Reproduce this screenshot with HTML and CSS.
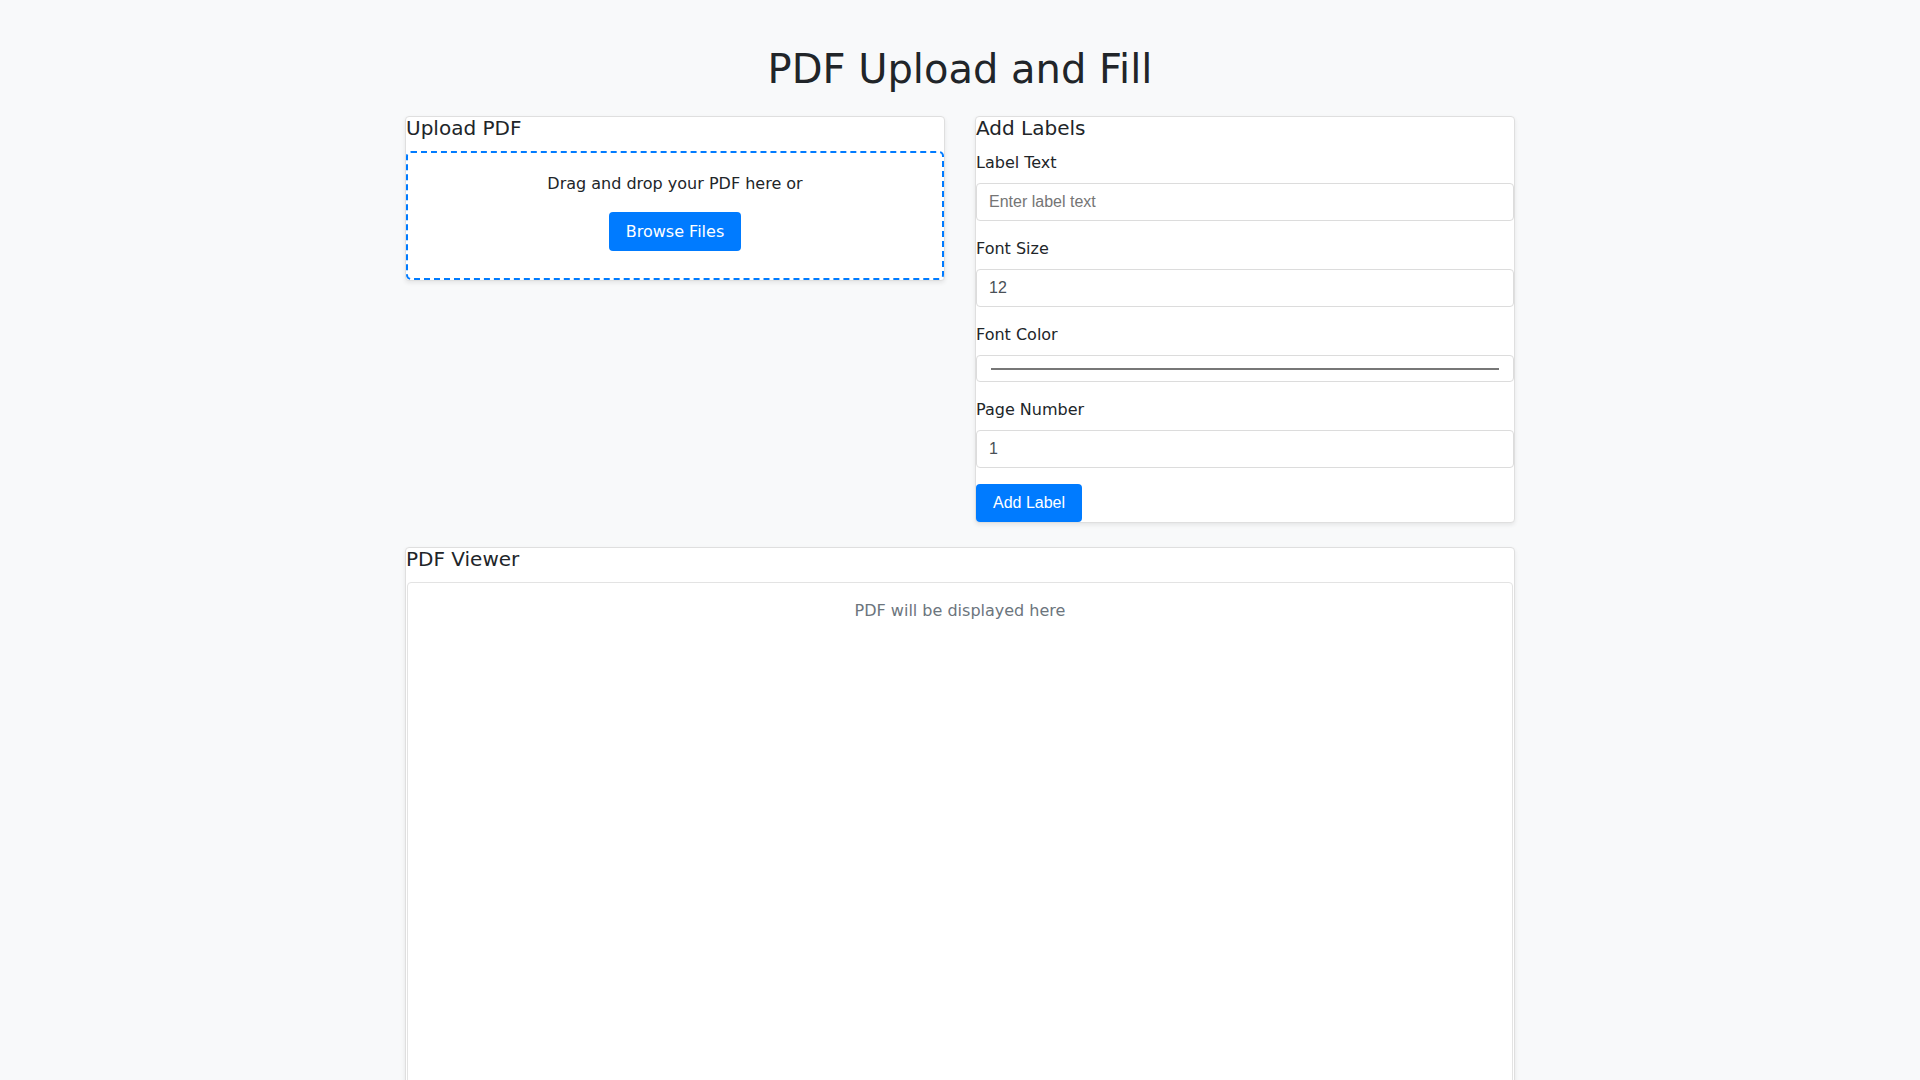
FILE: index.html
```html
<!DOCTYPE html>
<html lang="en">
<head>
  <meta charset="UTF-8">
  <meta name="viewport" content="width=device-width, initial-scale=1.0">
  <title>PDF Upload and Fill</title>
  <link rel="stylesheet" href="styles.css">
</head>
<body>

  <div class="page">
    <h1 class="page-title">PDF Upload and Fill</h1>

    <div class="top-row">
      <!-- Upload PDF -->
      <div class="card">
        <h5 class="card-title">Upload PDF</h5>
        <div id="drop-zone" class="drop-zone">
          <p>Drag and drop your PDF here or</p>
          <label for="file-input" class="btn">Browse Files</label>
          <input type="file" id="file-input" accept="application/pdf" hidden>
        </div>
      </div>

      <!-- Add Labels -->
      <div class="card">
        <h5 class="card-title">Add Labels</h5>
        <div class="form-group">
          <label for="label-text">Label Text</label>
          <input type="text" id="label-text" class="form-input" placeholder="Enter label text">
        </div>
        <div class="form-group">
          <label for="font-size">Font Size</label>
          <input type="number" id="font-size" class="form-input" value="12">
        </div>
        <div class="form-group">
          <label>Font Color</label>
          <div class="color-input"><span class="color-swatch"></span></div>
        </div>
        <div class="form-group">
          <label for="page-number">Page Number</label>
          <input type="number" id="page-number" class="form-input" value="1">
        </div>
        <button id="add-label" class="btn">Add Label</button>
      </div>
    </div>

    <!-- PDF Viewer -->
    <div class="card">
      <h5 class="card-title">PDF Viewer</h5>
      <div id="pdf-viewer" class="pdf-viewer">
        <p class="placeholder-text">PDF will be displayed here</p>
      </div>
    </div>
  </div>

</body>
</html>
```

FILE: styles.css
```css
/* Basic Reset */
* {
  margin: 0;
  padding: 0;
  box-sizing: border-box;
}

body {
  font-family: "DejaVu Sans", sans-serif;
  font-size: 16px;
  line-height: 1.5;
  background-color: #f8f9fa;
  color: #212529;
}

.page {
  width: 1110px;
  margin: 0 auto;
  padding: 45px 0 40px;
}

.page-title {
  font-size: 40px;
  font-weight: 500;
  line-height: 1.2;
  text-align: center;
  margin-bottom: 23px;
}

/* Layout */
.top-row {
  display: grid;
  grid-template-columns: 1fr 1fr;
  gap: 30px;
  align-items: start;
  margin-bottom: 24px;
}

/* Cards */
.card {
  background-color: #fff;
  border: 1px solid #dfdfdf;
  border-radius: 4px;
  box-shadow: 0 2px 4px rgba(0, 0, 0, 0.08);
}

.card-title {
  font-size: 20px;
  font-weight: 500;
  line-height: 1.1;
  margin-bottom: 12px;
}

/* Drop Zone */
.drop-zone {
  border: 2px dashed #007bff;
  border-radius: 5px;
  padding: 19px 20px 27px;
  text-align: center;
}

.drop-zone p {
  margin-bottom: 16px;
}

/* Buttons */
.btn {
  display: inline-block;
  padding: 10px 17px;
  background-color: #007bff;
  color: #fff;
  border: none;
  border-radius: 4px;
  font-size: 16px;
  line-height: normal;
  cursor: pointer;
}

button.btn {
  font-family: "Liberation Sans", Arial, sans-serif;
}

.btn:hover {
  background-color: #0069d9;
}

/* Form */
.form-group {
  margin-bottom: 16px;
}

.form-group label {
  display: block;
  margin-bottom: 8px;
}

.form-input {
  display: block;
  width: 100%;
  padding: 9px 12px;
  border: 1px solid #dcdcdc;
  border-radius: 4px;
  font-family: "Liberation Sans", Arial, sans-serif;
  font-size: 16px;
  color: #495057;
  background-color: #fff;
}

.form-input::placeholder {
  color: #757575;
}

.color-input {
  display: flex;
  align-items: center;
  height: 27px;
  padding: 0 14px;
  border: 1px solid #dcdcdc;
  border-radius: 4px;
  background-color: #fff;
}

.color-swatch {
  flex: 1;
  height: 2px;
  background-color: #777;
}

/* PDF Viewer */
.pdf-viewer {
  min-height: 700px;
  margin: 0 1px;
  padding: 16px;
  border: 1px solid #e3e3e3;
  border-radius: 4px;
  text-align: center;
}

.placeholder-text {
  color: #6c757d;
}
```
